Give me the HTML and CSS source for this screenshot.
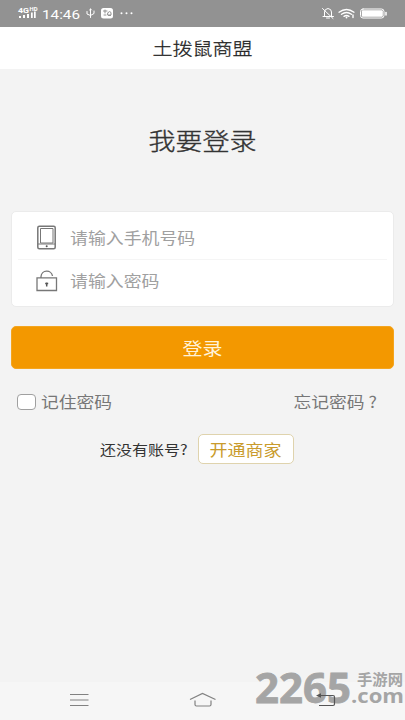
FILE: index.html
```
<!DOCTYPE html>
<html lang="zh-CN">
<head>
<meta charset="utf-8">
<title>土拨鼠商盟</title>
<link rel="stylesheet" href="styles.css">
</head>
<body>
<header class="status">
  <svg class="status-art" viewBox="0 0 405 27" fill="none" stroke="#fff" stroke-linecap="round">
    <g fill="#fff" stroke="none" class="latin">
      <text x="18" y="13" font-size="7.5" font-weight="700" textLength="11" lengthAdjust="spacingAndGlyphs">4G</text>
      <text x="29.500" y="10.500" font-size="4.500" font-weight="700" textLength="8" lengthAdjust="spacingAndGlyphs">HD</text>
      <path d="M19 16h2v2h-2zM23 15h2v3h-2zM27 14h2v4h-2zM31 12.500h1.700v5.500H31zM34 11.500h1.700v6.500H34z"/>
      <text x="42" y="18.500" font-size="13.500" textLength="38" lengthAdjust="spacingAndGlyphs">14:46</text>
      <rect x="101" y="8" width="12" height="10.500" rx="2.500"/>
      <circle cx="121.500" cy="13.300" r="1"/><circle cx="126.500" cy="13.300" r="1"/><circle cx="131.500" cy="13.300" r="1"/>
    </g>
    <path d="M90.500 9v8.500M87 11.500v2.500l3.500 1.500M94 11v2.500l-3.500 2M89.500 10l1-1 1 1"/>
    <path stroke="#929292" d="M103.500 11h3.500M105 10v3M104 15h2M108 12.500q2-2 3 0v2.500h-3zM108.500 15.500h2"/>
    <path d="M323 16.500h10.500M324.500 16v-4q0-3 3.500-3.500 3.500.5 3.500 3.500v4M326.500 18h3M322.500 8.500l10.500 10"/>
    <path stroke-width="1.400" d="M339 12.200q7.500-5.500 15 0M341.500 14.300q5-3.500 10 0M344 16.300q2.500-1.700 5 0M353 15v2.500"/>
    <circle cx="346.500" cy="17.500" r=".9" fill="#fff" stroke="none"/>
    <rect x="360.500" y="9" width="23.500" height="9" rx="2.500"/>
    <rect x="361.800" y="10.300" width="21" height="6.400" rx="1" fill="#fff" stroke="none"/>
    <path stroke-width="1.500" d="M386 12.500v2.500"/>
  </svg>
</header>
<div class="title-bar"><span class="wide">土拨鼠商盟</span></div>
<main>
  <h1><span class="wide">我要登录</span></h1>
  <form class="card">
    <label class="field phone">
      <svg class="icon" viewBox="0 0 22 26" fill="none" stroke="#777">
        <rect x="1.800" y="1.300" width="17.400" height="22.400" rx="1.500" stroke-width="1.500"/>
        <path d="M4.500 3.500h12.500v14.500H4.500zM2 19h17"/>
        <circle cx="10.700" cy="21.200" r="1" fill="#555" stroke="none"/>
      </svg>
      <span class="wide">请输入手机号码</span>
    </label>
    <label class="field pass">
      <svg class="icon" viewBox="0 0 22 26" fill="none" stroke="#777">
        <path stroke-width="1.300" d="M1 9.800h19.500v12.700H1zM5 9.500V8.500a5.800 5.800 0 0 1 11.500-.5"/>
        <path stroke="#555" stroke-width="1.500" d="M10.700 14.500v4M9.200 15.500h3"/>
      </svg>
      <span class="wide">请输入密码</span>
    </label>
  </form>
  <div class="login"><span class="wide">登录</span></div>
  <div class="options">
    <div class="remember"><i class="box"></i><span class="wide">记住密码</span></div>
    <span class="wide">忘记密码<b class="mark">?</b></span>
  </div>
  <div class="signup">
    <span class="wide">还没有账号?</span>
    <div class="open"><span class="wide">开通商家</span></div>
  </div>
</main>
<footer class="nav">
  <svg viewBox="0 0 405 38" fill="none" stroke="#818181" stroke-width="1.200">
    <path d="M70 12.500h18.500M70 18h18.500M70 23.500h18.500"/>
    <path d="M190 17.500l12.500-6 13 6M195 18.500v4q0 1.500 1.500 1.500h13q1.500 0 1.500-1.500v-4"/>
  </svg>
</footer>
<svg class="watermark" viewBox="0 0 155 50" fill="#a5a5a5">
  <text class="digits" x="5" y="37.500" font-size="42" stroke="#a5a5a5" stroke-width=".8" textLength="96" lengthAdjust="spacingAndGlyphs">2265</text>
  <text class="com" x="101" y="37.500" font-size="20" textLength="53" lengthAdjust="spacingAndGlyphs">.com</text>
  <text class="site" x="107" y="19.500" font-size="15" textLength="46" lengthAdjust="spacingAndGlyphs">手游网</text>
  <path d="M70 30.500h13q1.500 0 1.500 1.500v7q0 1.500-1.500 1.500H69" fill="none" stroke="#555" stroke-width="1.200"/>
  <path d="M66 30.500l5-2.200v4.400z" fill="#555"/>
</svg>
</body>
</html>
```
FILE: styles.css
```
* { box-sizing: border-box; }
body {
  margin: 0;
  height: 720px;
  display: flex;
  flex-direction: column;
  position: relative;
  overflow: hidden;
  background: #f3f3f3;
  font-family: "Noto Sans", "Noto Sans CJK SC", sans-serif;
  color: #333;
}
svg { display: block; }
.status { height: 27px; background: #929292; }
.status-art { width: 405px; height: 27px; }
.latin { font-family: Roboto, sans-serif; }
.wide {
  display: inline-block;
  line-height: 1;
  white-space: nowrap;
  font-family: "Noto Sans CJK SC", sans-serif;
  transform: scaleY(.88);
}
.title-bar {
  height: 42px;
  display: flex;
  align-items: center;
  justify-content: center;
  background: #fff;
  font-size: 20px;
  font-weight: 300;
  -webkit-text-stroke: .3px #222;
  color: #222;
}
main { flex: 1; padding: 0 11px; }
h1 {
  margin: 0;
  height: 142px;
  padding-bottom: 2px;
  display: flex;
  align-items: center;
  justify-content: center;
  font-size: 27px;
  font-weight: 300;
  -webkit-text-stroke: .4px #333;
}
.card {
  margin: 0;
  height: 96px;
  border: 1px solid #ebebeb;
  border-radius: 5px;
  background: #fff;
  font-size: 17.9px;
  color: #a0a0a0;
}
.field {
  height: 47px;
  margin: 0 6px;
  padding-left: 18px;
  display: flex;
  align-items: center;
  gap: 12px;
}
.phone { height: 48px; padding-top: 4px; border-bottom: 1px solid #f5f5f5; }
.pass { padding-bottom: 6px; }
.icon { width: 22px; height: 26px; }
.login {
  height: 43px;
  margin-top: 19px;
  border: 1px solid #f4a51f;
  border-radius: 5px;
  display: flex;
  align-items: center;
  justify-content: center;
  background: #f39800;
  color: #fff3d9;
  font-size: 20px;
}
.options {
  height: 30px;
  margin-top: 18px;
  padding: 0 17px 0 6px;
  display: flex;
  align-items: center;
  justify-content: space-between;
  font-size: 17.8px;
  color: #777;
}
.remember { display: flex; align-items: center; gap: 5px; }
.box {
  width: 19px;
  height: 16px;
  border: 1px solid #a0a0a0;
  border-radius: 4px;
  background: #fff;
}
.mark { margin-left: 4px; font-weight: 400; }
.signup {
  margin-top: 17px;
  padding-left: 89px;
  display: flex;
  align-items: center;
  gap: 10px;
  font-size: 16px;
}
.open {
  width: 96px;
  height: 30px;
  border: 1px solid #dfd3ad;
  border-radius: 5px;
  display: flex;
  align-items: center;
  justify-content: center;
  background: #fff;
  color: #c99b2c;
  font-size: 18px;
}
.nav { height: 38px; background: #f6f6f6; }
.nav svg { width: 405px; height: 38px; }
.watermark {
  position: absolute;
  left: 250px;
  top: 665px;
  width: 155px;
  height: 50px;
}
.digits, .com { font-family: "Open Sans", sans-serif; font-weight: 700; }
.site { font-family: "Noto Sans CJK SC", sans-serif; font-weight: 700; }
```
